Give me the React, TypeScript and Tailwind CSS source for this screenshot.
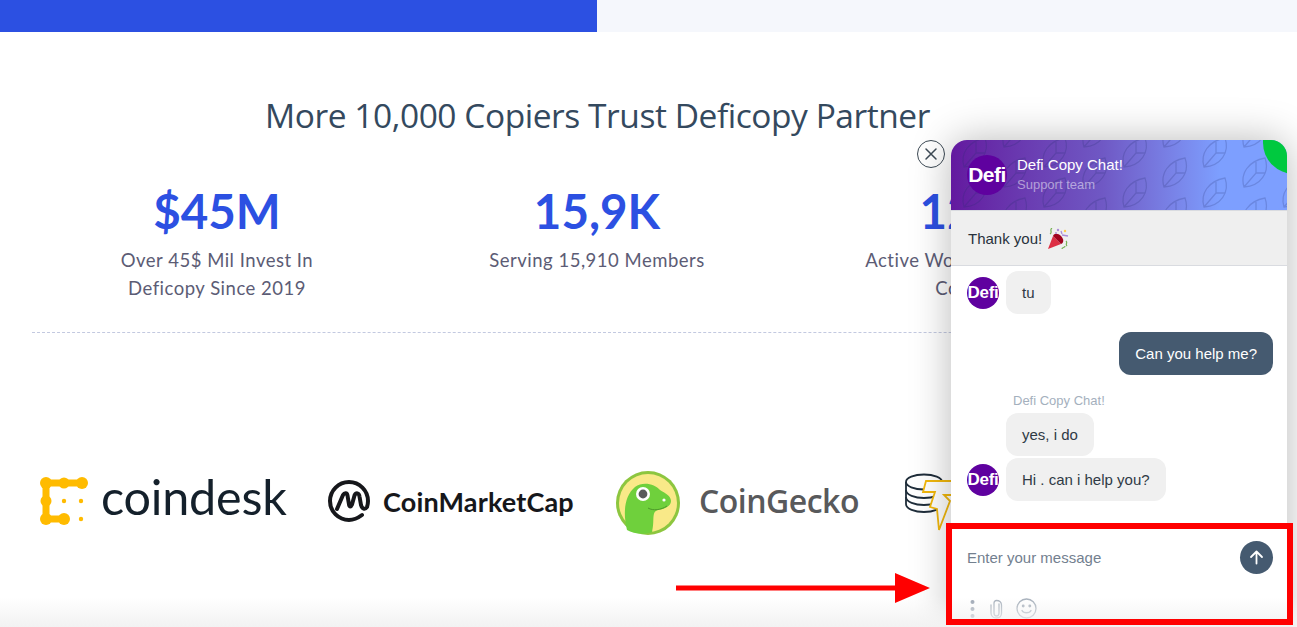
const stats = [
  { value: '$45M', lines: ['Over 45$ Mil Invest In', 'Deficopy Since 2019'] },
  { value: '15,9K', lines: ['Serving 15,910 Members'] },
  { value: '120K', lines: ['Active Worldwide Copy In', 'Countries'] },
];

function CoindeskMark() {
  return (
    <svg width="48" height="48" viewBox="0 0 48 48" fill="#FFBB00">
      <path d="M6 6 H42 M6 6 V42 H24" stroke="#FFBB00" strokeWidth="7" fill="none" />
      <circle cx="6" cy="6" r="6" />
      <circle cx="24" cy="6" r="5.5" />
      <circle cx="42" cy="6" r="6" />
      <circle cx="6" cy="24" r="5.5" />
      <circle cx="6" cy="42" r="6" />
      <circle cx="24" cy="42" r="6" />
      <circle cx="24" cy="24" r="2.2" />
      <circle cx="41" cy="24" r="2.2" />
      <circle cx="41" cy="42" r="2.2" />
    </svg>
  );
}

function CmcMark() {
  return (
    <svg width="44" height="44" viewBox="0 0 44 44" fill="none" stroke="#16171b" strokeWidth="4" strokeLinecap="round" strokeLinejoin="round">
      <path d="M35 36 C31 39 27 41 22 41 C11.5 41 3 32.5 3 22 C3 11.5 11.5 3 22 3 C32.5 3 41 11.5 41 22 C41 24.5 40.5 26.5 40 28 C38 31 35 30 34 26 L32.5 17.5 C32 13.5 29 13.5 27.5 16.5 L25 25.5 C24 28 22.5 28 22 25.5 L20.5 16.5 C20 13.5 17.5 13.5 16 16 L10 30" />
    </svg>
  );
}

function GeckoMark() {
  return (
    <svg width="66" height="66" viewBox="0 0 66 66">
      <circle cx="33" cy="33" r="32" fill="#8DC63F" />
      <circle cx="33" cy="33" r="29" fill="#F9E988" />
      <path
        d="M12 60 C8 44 9 26 20 17 C28 11 40 14 45 20 C50 23 56 26 56 31 C56 36 50 39 43 40 C36 42 40 50 37 62 C30 65 18 64 12 60 Z"
        fill="#6FD03C"
      />
      <circle cx="28" cy="24" r="7" fill="#fff" />
      <circle cx="28" cy="24" r="4.4" fill="#58595B" />
      <circle cx="49" cy="30" r="1.6" fill="#fff" />
      <path d="M33 38 C38 41 46 40 52 36" stroke="#4c9a2a" strokeWidth="1" fill="none" />
    </svg>
  );
}

function StackMark() {
  return (
    <svg width="60" height="60" viewBox="0 0 60 60" fill="none">
      <g stroke="#1f2d3a" strokeWidth="1.8">
        <ellipse cx="20" cy="9" rx="18" ry="7.5" fill="#fff" />
        <path d="M2 9 V31 C2 36 11 39 20 39 C29 39 38 36 38 31 V9" />
        <path d="M2 17 C2 22 11 25 20 25 C29 25 38 22 38 17" />
        <path d="M2 24 C2 29 11 32 20 32 C29 32 38 29 38 24" />
      </g>
      <path d="M22 8 H52 L48 22 H40 L46 28 L35 57 L33 36 L26 34 L31 19 H19 Z" fill="#fff" stroke="#F2B80C" strokeWidth="1.8" />
    </svg>
  );
}

function DefiAvatar({ size }: { size: 'sm' | 'lg' }) {
  if (size === 'lg') {
    return (
      <div className="flex h-10 w-10 shrink-0 items-center justify-center overflow-hidden whitespace-nowrap rounded-full bg-[#5f019f] text-[21px] font-bold tracking-[-0.5px] text-white">
        Defi
      </div>
    );
  }
  return (
    <div className="flex h-8 w-8 shrink-0 items-center justify-center overflow-hidden whitespace-nowrap rounded-full bg-[#5f019f] text-[17px] font-bold tracking-[-0.3px] text-white">
      Defi
    </div>
  );
}

function LeafPattern() {
  const leaf = 'M3 29 C-1 16 7 3 24 0 C29 14 20 28 3 29 Z M3 29 L15 15 M15 15 L15 4 M15 15 L24 15';
  return (
    <svg className="absolute inset-0 h-full w-full" fill="none">
      <defs>
        <pattern id="leaves" x="2" y="-7" width="80" height="40" patternUnits="userSpaceOnUse">
          <g stroke="#1d2a6b" strokeOpacity="0.2" strokeWidth="1.3">
            <path d={leaf} transform="translate(8 5)" />
            <path d={leaf} transform="translate(48 -15)" />
            <path d={leaf} transform="translate(48 25)" />
          </g>
        </pattern>
      </defs>
      <rect width="100%" height="100%" fill="url(#leaves)" />
    </svg>
  );
}

function PartyPopper() {
  return (
    <svg width="22" height="22" viewBox="0 0 22 22" className="ml-[5px] inline-block">
      <path d="M1 21 L6 8 L14 16 Z" fill="#DD2E44" />
      <path d="M6 8 L14 16 C17 15 17 11 14 8 C11 5 7 5 6 8 Z" fill="#A0041E" />
      <path d="M3 6 C6 4 2 2 5 0 M20 18 C18 16 21 15 19 13 M15 21 C15 19 18 20 18 18" stroke="#77B255" strokeWidth="1.2" fill="none" />
      <circle cx="11" cy="2" r="1.2" fill="#AA8DD8" />
      <circle cx="18" cy="3" r="1.2" fill="#FFCC4D" />
      <circle cx="9" cy="5" r="0.9" fill="#AA8DD8" />
      <path d="M15 7 L21 8 M14 3 L15 6" stroke="#AA8DD8" strokeWidth="1.3" />
    </svg>
  );
}

function ChatWidget() {
  return (
    <div className="absolute left-[951px] top-[140px] flex h-[487px] w-[336px] flex-col rounded-t-2xl bg-white font-['Liberation_Sans',sans-serif] shadow-[0_0_40px_rgba(0,0,0,0.28)]">
      <div className="relative flex h-[70px] shrink-0 items-center gap-[10px] overflow-hidden rounded-t-2xl bg-gradient-to-r from-[#63189f] via-[#6f58c4] via-45% to-[#7d9fff] to-80% pl-4">
        <LeafPattern />
        <div className="absolute -right-[12px] -top-[14px] h-[48px] w-[36px] rounded-bl-[40px] rounded-br-[6px] bg-[#00c93f]" />
        <div className="relative"><DefiAvatar size="lg" /></div>
        <div className="relative">
          <div className="text-[15px] leading-[20px] text-white">Defi Copy Chat!</div>
          <div className="text-[13px] leading-[20px] text-white/50">Support team</div>
        </div>
      </div>

      <div className="flex h-[56px] shrink-0 items-center border-y border-[#d9dbe0] bg-[#efefef] pl-[17px] pt-[2px] text-[15px] text-[#28323c]">
        Thank you!
        <PartyPopper />
      </div>

      <div className="flex min-h-0 flex-1 flex-col pl-4 pr-[14px] pt-[5px] text-[15px]">
        <div className="flex items-center gap-[7px]">
          <DefiAvatar size="sm" />
          <div className="flex h-[43px] items-center rounded-xl bg-[#f0f0f0] px-4 pt-[2px] text-[#2f3a45]">tu</div>
        </div>
        <div className="mt-[18px] flex justify-end">
          <div className="flex h-[43px] items-center rounded-xl bg-[#455a70] px-4 pt-[2px] text-white">Can you help me?</div>
        </div>
        <div className="ml-[46px] mt-[18px] text-[13px] leading-4 text-[#a4b0bd]">Defi Copy Chat!</div>
        <div className="ml-[39px] mt-[4px] flex">
          <div className="flex h-[43px] items-center rounded-xl bg-[#f0f0f0] px-4 pt-[2px] text-[#2f3a45]">yes, i do</div>
        </div>
        <div className="mt-[2px] flex items-center gap-[7px]">
          <DefiAvatar size="sm" />
          <div className="flex h-[43px] items-center rounded-xl bg-[#f0f0f0] px-4 pt-[2px] text-[#2f3a45]">Hi . can i help you?</div>
        </div>
      </div>

      <div className="flex h-[103px] shrink-0 flex-col pl-4 pr-[14px]">
        <div className="mt-[17px] flex items-center justify-between">
          <span className="pt-[2px] text-[15px] text-[#73808f]">Enter your message</span>
          <div className="flex h-[33px] w-[33px] items-center justify-center rounded-full bg-[#455a70]">
            <svg width="15" height="15" viewBox="0 0 15 15" fill="none" stroke="#fff" strokeWidth="1.8" strokeLinecap="round" strokeLinejoin="round">
              <path d="M7.5 13.5 V1.5 M2 7 L7.5 1.5 L13 7" />
            </svg>
          </div>
        </div>
        <div className="mt-[24px] flex items-center pl-[3px]">
          <svg width="5" height="20" viewBox="0 0 5 20" fill="#98a2b0">
            <circle cx="2.5" cy="3" r="2" />
            <circle cx="2.5" cy="10" r="2" />
            <circle cx="2.5" cy="17" r="2" />
          </svg>
          <svg className="ml-[14px]" width="14" height="20" viewBox="0 0 14 20" fill="none" stroke="#a3adb9" strokeWidth="1.3" strokeLinecap="round">
            <path d="M10 5 V14 C10 16 9 17 7.5 17 C6 17 5 16 5 14 V4 C5 2.5 6 1.5 7.5 1.5 C10 1.5 12.5 3 12.5 6 V14 C12.5 17 10.5 19 7.5 19 C4 19 2 17 2 14 V6" />
          </svg>
          <svg className="ml-[13px]" width="21" height="21" viewBox="0 0 21 21" fill="none" stroke="#a3adb9" strokeWidth="1.3" strokeLinecap="round">
            <circle cx="10.5" cy="10.5" r="9.5" />
            <circle cx="7.2" cy="8" r="0.8" fill="#a3adb9" />
            <circle cx="13.8" cy="8" r="0.8" fill="#a3adb9" />
            <path d="M6 12.5 C7.5 15.5 13.5 15.5 15 12.5" />
          </svg>
        </div>
      </div>
    </div>
  );
}

export default function App() {
  return (
    <div className="relative h-[627px] w-[1297px] overflow-hidden bg-white font-['Lato',sans-serif]">
      <div className="flex h-8">
        <div className="w-[597px] bg-[#2c50e2]" />
        <div className="flex-1 bg-[#f5f7fc]" />
      </div>

      <div className="w-[1195px]">
        <h2 className="mt-[59px] text-center font-['Open_Sans',sans-serif] text-[33.5px] leading-[48px] tracking-[-0.45px] text-[#34495e]">
          More 10,000 Copiers Trust Deficopy Partner
        </h2>

        <div className="ml-[27px] mt-[42px] grid w-[1140px] grid-cols-3">
          {stats.map((s) => (
            <div key={s.value} className="text-center">
              <div className="text-[47.5px] font-bold leading-[60px] text-[#2c50e2]">{s.value}</div>
              <div className="mt-[5px] text-[18.5px] leading-[28px] tracking-[0.5px] text-[#5c5c75]">
                {s.lines.map((l) => (
                  <div key={l}>{l}</div>
                ))}
              </div>
            </div>
          ))}
        </div>

        <div className="ml-8 mt-[30px] w-[1130px] border-t border-dashed border-[#c3c9e0]" />

        <div className="mt-[137px] flex h-[66px] items-center pl-[40px]">
          <div className="mb-[4px]"><CoindeskMark /></div>
          <span className="mb-[14px] ml-[13px] w-[186px] font-['Lato',sans-serif] text-[48.5px] leading-none tracking-[-0.2px] text-[#14202b]">coindesk</span>
          <div className="mb-[4px] ml-[40px]"><CmcMark /></div>
          <span className="mb-[4px] ml-[12px] w-[192px] font-['Lato',sans-serif] text-[27px] font-bold leading-none tracking-[0.15px] text-[#16171b]">CoinMarketCap</span>
          <div className="ml-[40px]"><GeckoMark /></div>
          <span className="mb-[4px] ml-[18px] w-[161px] font-['Open_Sans',sans-serif] text-[32px] font-semibold leading-none tracking-[-0.5px] text-[#58595b]">CoinGecko</span>
          <div className="ml-[44px] mt-[3px] self-start"><StackMark /></div>
        </div>
      </div>

      <div className="absolute left-[917px] top-[140px] flex h-7 w-7 items-center justify-center rounded-full border-[1.5px] border-[#3d4a55] bg-white">
        <svg width="14" height="14" viewBox="0 0 14 14" stroke="#3d4a55" strokeWidth="1.5" strokeLinecap="round">
          <path d="M2 2 L12 12 M12 2 L2 12" />
        </svg>
      </div>

      <ChatWidget />

      <div className="pointer-events-none absolute inset-x-0 bottom-0 h-[30px] bg-gradient-to-b from-transparent to-[#f2f2f2]" />

      <div className="absolute left-[946px] top-[523px] h-[102px] w-[347px] border-[6px] border-[#ff0000]" />

      <svg className="absolute left-[676px] top-[573px]" width="254" height="30" viewBox="0 0 254 30">
        <path d="M0 12.5 H219 V0 L254 15 L219 30 V17.5 H0 Z" fill="#ff0000" />
      </svg>
    </div>
  );
}
